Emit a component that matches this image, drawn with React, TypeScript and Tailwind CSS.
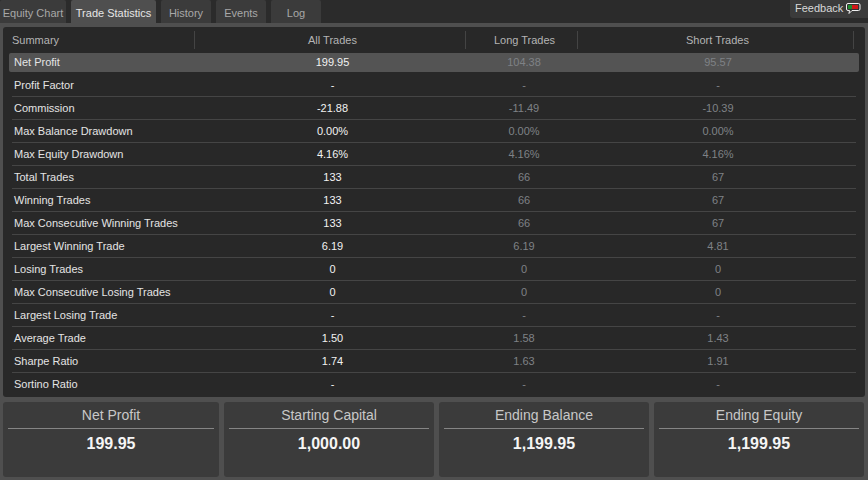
import React from "react";

const tabs = [
  { label: "Equity Chart", width: "w-[66px]" },
  { label: "Trade Statistics", width: "w-[85px]", active: true },
  { label: "History", width: "w-[50px]" },
  { label: "Events", width: "w-[50px]" },
  { label: "Log", width: "w-[50px]" },
];

const rows = [
  ["Net Profit", "199.95", "104.38", "95.57"],
  ["Profit Factor", "-", "-", "-"],
  ["Commission", "-21.88", "-11.49", "-10.39"],
  ["Max Balance Drawdown", "0.00%", "0.00%", "0.00%"],
  ["Max Equity Drawdown", "4.16%", "4.16%", "4.16%"],
  ["Total Trades", "133", "66", "67"],
  ["Winning Trades", "133", "66", "67"],
  ["Max Consecutive Winning Trades", "133", "66", "67"],
  ["Largest Winning Trade", "6.19", "6.19", "4.81"],
  ["Losing Trades", "0", "0", "0"],
  ["Max Consecutive Losing Trades", "0", "0", "0"],
  ["Largest Losing Trade", "-", "-", "-"],
  ["Average Trade", "1.50", "1.58", "1.43"],
  ["Sharpe Ratio", "1.74", "1.63", "1.91"],
  ["Sortino Ratio", "-", "-", "-"],
];

const cards = [
  ["Net Profit", "199.95"],
  ["Starting Capital", "1,000.00"],
  ["Ending Balance", "1,199.95"],
  ["Ending Equity", "1,199.95"],
];

function FeedbackIcon() {
  return (
    <svg width="15" height="12" viewBox="0 0 15 12" className="ml-[3px] mt-[1px]">
      <path d="M2 0.5H12.5Q14 0.5 14 2V6Q14 7.5 12.5 7.5H6L3 10.5L3.5 7.5H2Q0.5 7.5 0.5 6V2Q0.5 0.5 2 0.5Z" fill="#333" stroke="#f0f0f0" />
      <rect x="2" y="2" width="4" height="4" fill="#1f8a2e" />
      <rect x="6" y="2" width="6" height="4" fill="#d01818" />
    </svg>
  );
}

export default function App() {
  return (
    <div className="flex h-[480px] w-[868px] flex-col overflow-hidden bg-[#4f4f4f] font-['Liberation_Sans',Arial,sans-serif] text-[11px]">
      {/* Tab strip */}
      <div className="flex h-[23px] shrink-0 justify-between bg-[#2b2b2b]">
        <div className="flex gap-[5px]">
          {tabs.map((tab) => (
            <div
              key={tab.label}
              className={`flex h-[23px] items-center justify-center rounded-t-[2px] pt-[3px] ${tab.width} ${
                tab.active ? "bg-[#4f4f4f] text-[#e6e6e6]" : "bg-[#3b3b3b] text-[#a8a8a8]"
              }`}
            >
              {tab.label}
            </div>
          ))}
        </div>
        <div className="flex h-[18px] w-[78px] items-center rounded-bl-[3px] bg-[#3b3b3b] pb-[2px] pl-[5px] text-[#d8d8d8]">
          Feedback
          <FeedbackIcon />
        </div>
      </div>

      {/* Statistics table */}
      <div className="mx-[3px] mt-[4px] h-[370px] shrink-0 rounded-[3px] bg-[#282828] pl-[6px] pt-[4px]">
        <div className="flex h-[20px] items-center pb-[2px] text-[#b4b4b4]">
          <div className="flex h-full w-[186px] items-center border-r border-[#444] pl-[3px]">Summary</div>
          <div className="flex h-full w-[271px] items-center justify-center border-r border-[#444] pl-[5px]">All Trades</div>
          <div className="flex h-full w-[112px] items-center justify-center border-r border-[#444] pl-[6px]">Long Trades</div>
          <div className="flex h-full w-[276px] items-center justify-center border-r border-[#444] pl-[4px]">Short Trades</div>
        </div>
        <div className="mt-[2px] flex flex-col">
          {rows.map((row, i) => (
            <div
              key={row[0]}
              className={`grid items-center ${
                i === 0
                  ? "mb-[2px] h-[19px] w-[850px] grid-cols-[188px_271px_112px_276px] rounded-[2px] bg-[#545454]"
                  : i === rows.length - 1
                    ? "h-[23px] grid-cols-[188px_271px_112px_276px]"
                    : "ml-[3px] h-[23px] w-[844px] grid-cols-[185px_271px_112px_276px] border-b border-[#454545]"
              }`}
            >
              <div className={`text-[#e4e4e4] ${i === 0 || i === rows.length - 1 ? "pl-[5px]" : "pl-[2px]"}`}>{row[0]}</div>
              <div className="text-center text-[#f2f2f2]">{row[1]}</div>
              <div className="text-center text-[#7f8286]">{row[2]}</div>
              <div className="text-center text-[#7f8286]">{row[3]}</div>
            </div>
          ))}
        </div>
      </div>

      {/* Summary cards */}
      <div className="ml-[3px] mt-[5px] grid grid-cols-[216px_210px_210px_210px] gap-[5px]">
        {cards.map(([title, value]) => (
          <div key={title} className="h-[75px] rounded-[3px] bg-[#3b3b3b] px-[5px]">
            <div className="flex h-[27px] items-center justify-center border-b border-[#858585] text-[14px] text-[#c8c8c8]">{title}</div>
            <div className="mt-[5px] text-center text-[16px] leading-[20px] font-bold text-[#f5f5f5]">{value}</div>
          </div>
        ))}
      </div>
    </div>
  );
}
